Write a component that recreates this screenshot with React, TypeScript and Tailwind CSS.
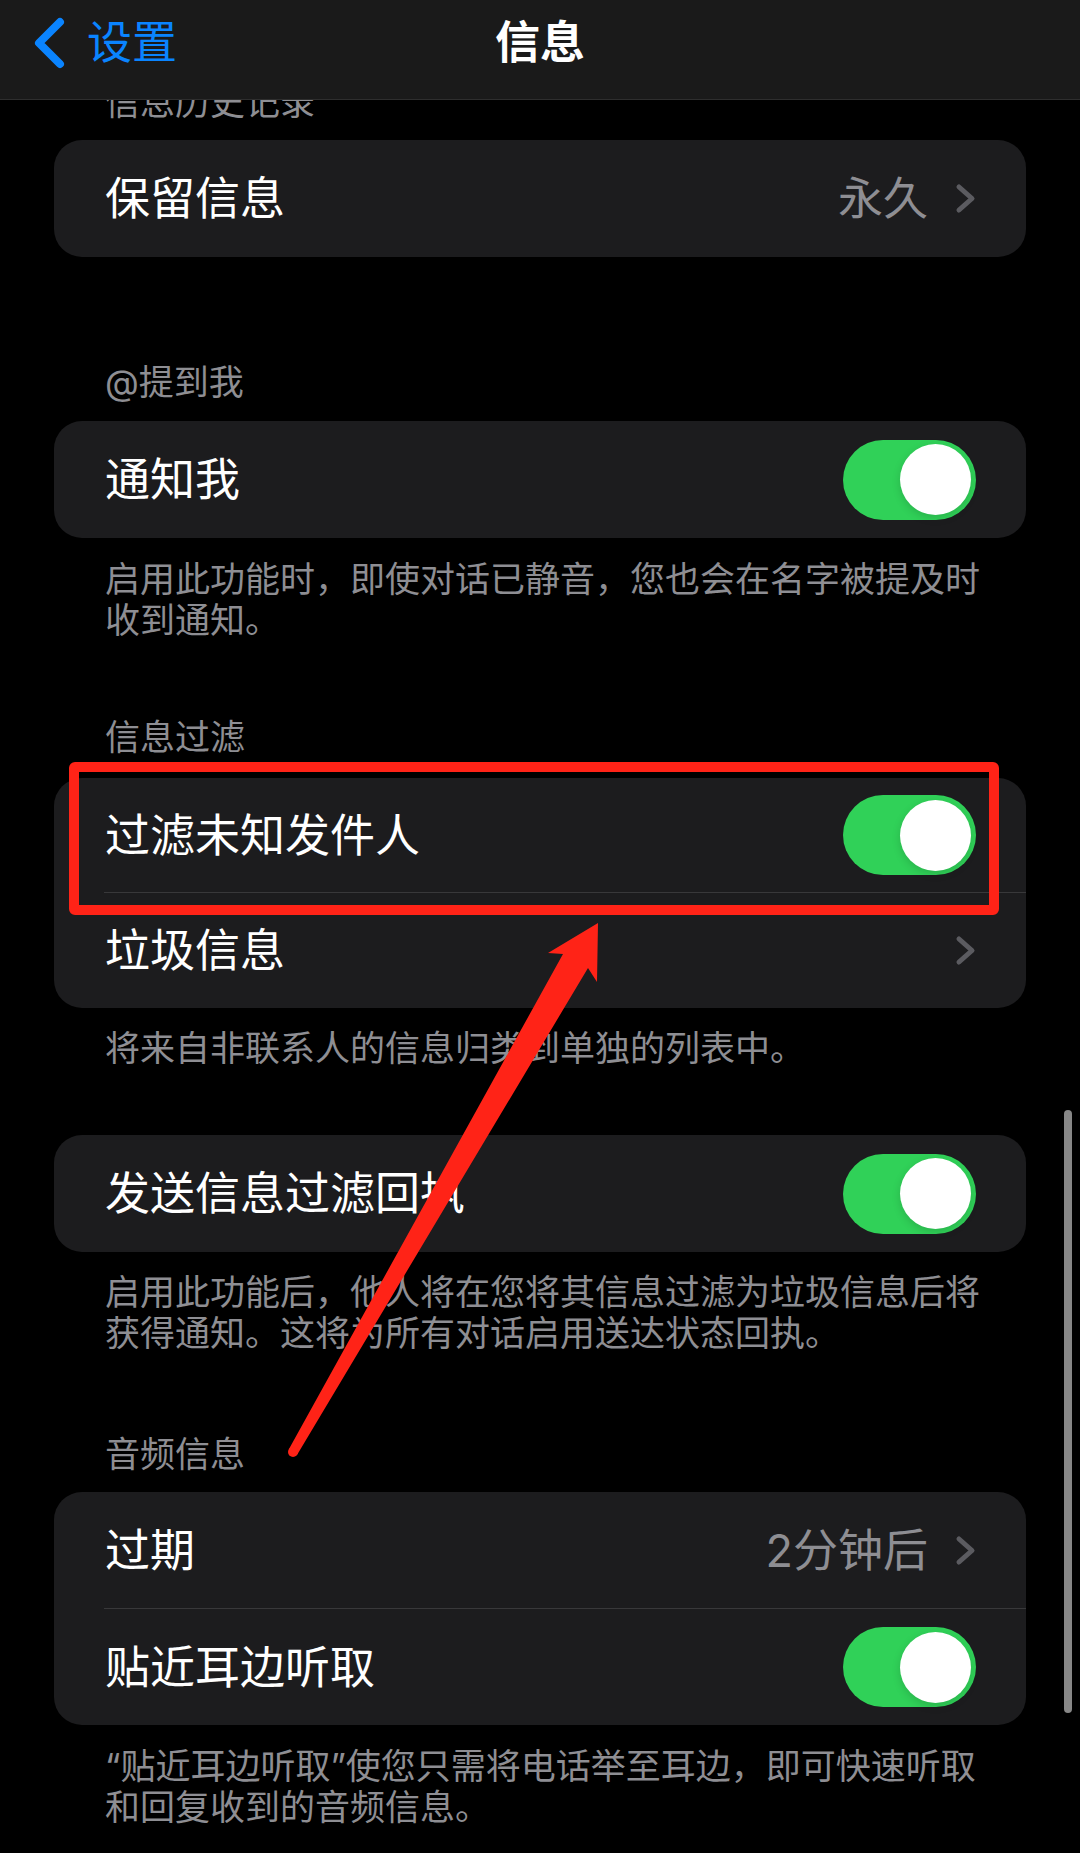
import React from "react";

function Chevron() {
  return (
    <svg width="21" height="31" viewBox="0 0 21 31" fill="none">
      <polyline
        points="4,4 17,15.5 4,27"
        stroke="#5b5b60"
        strokeWidth="5"
        strokeLinecap="round"
        strokeLinejoin="round"
      />
    </svg>
  );
}

function Toggle() {
  return (
    <div className="flex h-[80px] w-[133px] items-center justify-end rounded-full bg-[#30d158] pr-[5px]">
      <div className="h-[71px] w-[71px] rounded-full bg-white shadow-[0_3px_8px_rgba(0,0,0,0.15)]" />
    </div>
  );
}

type RowProps = {
  label: string;
  value?: string;
  chevron?: boolean;
  toggle?: boolean;
  height: string;
};

function Row({ label, value, chevron, toggle, height }: RowProps) {
  return (
    <div className={`flex items-center justify-between pl-[51px] pr-[50px] ${height}`}>
      <span className="text-[45px] leading-none text-white">{label}</span>
      <div className="flex items-center gap-[27px]">
        {value && <span className="text-[45px] leading-none text-[#8e8e93]">{value}</span>}
        {chevron && <Chevron />}
        {toggle && <Toggle />}
      </div>
    </div>
  );
}

function Separator() {
  return <div className="ml-[50px] h-px bg-[#38383a]" />;
}

function Header({ children, className = "" }: { children: React.ReactNode; className?: string }) {
  return (
    <p className={`pl-[51px] text-[35px] leading-[41px] text-[#8e8e93] ${className}`}>{children}</p>
  );
}

function Footer({ children, className = "" }: { children: React.ReactNode; className?: string }) {
  return (
    <p className={`whitespace-nowrap pl-[51px] text-[35px] leading-[41px] text-[#8e8e93] ${className}`}>
      {children}
    </p>
  );
}

function Card({ children, className = "" }: { children: React.ReactNode; className?: string }) {
  return <div className={`overflow-hidden rounded-[28px] bg-[#1c1c1e] ${className}`}>{children}</div>;
}

export default function App() {
  return (
    <div className="relative h-[1853px] w-[1080px] overflow-hidden bg-black font-['Inter','Noto_Sans_CJK_SC',sans-serif]">
      {/* Scrolled content */}
      <div className="flex flex-col px-[54px] pt-[82px]">
        <Header>信息历史记录</Header>
        <Card className="mt-[17px]">
          <Row label="保留信息" value="永久" chevron height="h-[117px]" />
        </Card>

        <Header className="mt-[105px]">@提到我</Header>
        <Card className="mt-[18px]">
          <Row label="通知我" toggle height="h-[117px]" />
        </Card>
        <Footer className="mt-[21px]">
          启用此功能时，即使对话已静音，您也会在名字被提及时
          <br />
          收到通知。
        </Footer>

        <Header className="mt-[76px]">信息过滤</Header>
        <Card className="mt-[20px]">
          <Row label="过滤未知发件人" toggle height="h-[114px]" />
          <Separator />
          <Row label="垃圾信息" chevron height="h-[115px]" />
        </Card>
        <Footer className="mt-[20px]">将来自非联系人的信息归类到单独的列表中。</Footer>

        <Card className="mt-[66px]">
          <Row label="发送信息过滤回执" toggle height="h-[117px]" />
        </Card>
        <Footer className="mt-[20px]">
          启用此功能后，他人将在您将其信息过滤为垃圾信息后将
          <br />
          获得通知。这将为所有对话启用送达状态回执。
        </Footer>

        <Header className="mt-[80px]">音频信息</Header>
        <Card className="mt-[17px]">
          <Row label="过期" value="2分钟后" chevron height="h-[116px]" />
          <Separator />
          <Row label="贴近耳边听取" toggle height="h-[116px]" />
        </Card>
        <Footer className="mt-[21px]">
          “贴近耳边听取”使您只需将电话举至耳边，即可快速听取
          <br />
          和回复收到的音频信息。
        </Footer>
      </div>

      {/* Navigation bar over the content */}
      <div className="absolute left-0 right-0 top-0 grid h-[100px] grid-cols-3 items-center border-b border-[#2e2e2e] bg-[#1a1a1a] pb-[14px]">
        <div className="flex items-center gap-[21px] pl-[30px]">
          <svg width="36" height="56" viewBox="0 0 36 56" fill="none">
            <polyline
              points="30,7 9,28 30,49"
              stroke="#0a84ff"
              strokeWidth="8"
              strokeLinecap="round"
              strokeLinejoin="round"
            />
          </svg>
          <span className="text-[45px] leading-none text-[#0a84ff]">设置</span>
        </div>
        <div className="text-center text-[45px] font-semibold leading-none text-white">信息</div>
        <div />
      </div>

      {/* Scroll indicator */}
      <div className="absolute left-[1064px] top-[1110px] h-[603px] w-[8px] rounded-full bg-[#878787]" />

      {/* Red annotation box */}
      <div className="pointer-events-none absolute left-[69px] top-[762px] h-[153px] w-[930px] rounded-[6px] border-[10px] border-[#ff2317]" />

      {/* Red annotation arrow */}
      <svg
        className="pointer-events-none absolute left-0 top-0"
        width="1080"
        height="1853"
        viewBox="0 0 1080 1853"
      >
        <polygon
          points="598,923 597,982 588,968 297.3,1454.5 288.7,1449.5 563,954 548,953"
          fill="#ff2317"
        />
        <circle cx="293" cy="1452" r="5" fill="#ff2317" />
      </svg>
    </div>
  );
}
